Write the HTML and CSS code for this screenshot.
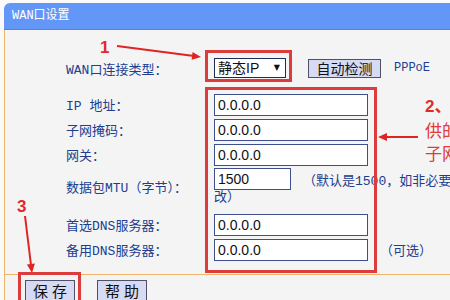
FILE: index.html
```html
<!DOCTYPE html>
<html lang="zh-CN">
<head>
    <meta charset="UTF-8" />
    <title>WAN口设置</title>
    <link rel="stylesheet" href="styles.css">
</head>
<body>
<div class="panel">
    <div class="panel-title">WAN口设置</div>
    <div class="panel-body">
        <div class="form">
            <div class="row row-type">
                <label class="label">WAN口连接类型：</label>
                <div class="field">
                    <span class="select-wrap">
                        <select class="select"><option>静态IP</option></select>
                    </span>
                    <button class="btn btn-detect">自动检测</button>
                    <span class="type-name">PPPoE</span>
                </div>
            </div>
            <div class="row">
                <label class="label">IP 地址：</label>
                <div class="field"><input class="input" value="0.0.0.0"></div>
            </div>
            <div class="row">
                <label class="label">子网掩码：</label>
                <div class="field"><input class="input" value="0.0.0.0"></div>
            </div>
            <div class="row">
                <label class="label">网关：</label>
                <div class="field"><input class="input" value="0.0.0.0"></div>
            </div>
            <div class="row row-mtu">
                <label class="label">数据包MTU（字节）：</label>
                <div class="field field-mtu">
                    <div class="mtu-line">
                        <input class="input input-short" value="1500">
                        <span class="note">（默认是1500，如非必要，请勿修</span>
                    </div>
                    <div class="note-wrap">改）</div>
                </div>
            </div>
            <div class="row row-dns">
                <label class="label">首选DNS服务器：</label>
                <div class="field"><input class="input" value="0.0.0.0"></div>
            </div>
            <div class="row">
                <label class="label">备用DNS服务器：</label>
                <div class="field">
                    <input class="input" value="0.0.0.0">
                    <span class="note">（可选）</span>
                </div>
            </div>
        </div>
        <div class="actions">
            <button class="btn btn-action">保存</button>
            <button class="btn btn-action">帮助</button>
        </div>
    </div>
</div>

<!-- tutorial markup drawn over the page -->
<div class="marks">
    <div class="mark-box box-type"></div>
    <div class="mark-box box-fields"></div>
    <div class="mark-box box-save"></div>
    <span class="mark-num num-1">1</span>
    <span class="mark-num num-3">3</span>
    <div class="mark-text">
        <div class="mark-num">2、请输入宽带运营商提</div>
        <div>供的IP地址、</div>
        <div>子网掩码、网关等</div>
    </div>
    <svg class="arrows" width="450" height="300" viewBox="0 0 450 300">
        <line x1="117" y1="46" x2="194" y2="56" />
        <polygon points="201,57 191.6,59.8 192.6,51.9" />
        <line x1="418" y1="137" x2="386" y2="137" />
        <polygon points="378,137 387,133 387,141" />
        <line x1="25" y1="216" x2="31" y2="265" />
        <polygon points="32,273 34.9,263.6 26.9,264.6" />
    </svg>
</div>
</body>
</html>
```

FILE: styles.css
```css
* {
    margin: 0;
    padding: 0;
    box-sizing: border-box;
}

body {
    background-color: #fafafa;
    font-family: "Liberation Mono", "Noto Sans CJK SC", monospace;
    color: #203d8f;
    overflow: hidden;
    width: 450px;
    height: 300px;
    position: relative;
}

.panel {
    margin: 3px 0 0 4px;
    width: 520px;
}

.panel-title {
    height: 27px;
    background-color: #6297f8;
    border-bottom: 1px solid #5182e8;
    border-top-left-radius: 6px;
    color: white;
    font-size: 12px;
    line-height: 26px;
    padding-left: 8px;
}

.panel-body {
    background-color: #f4f4f4;
    border-left: 1px solid #efb66a;
    min-height: 280px;
}

.form {
    padding: 24px 0 12px 61px;
}

.row {
    display: flex;
    align-items: center;
    height: 25px;
}

.row-type {
    height: 28px;
    margin-bottom: 10px;
}

.row-mtu {
    height: auto;
    padding: 1px 0;
}

.row-dns {
    margin-top: 6px;
}

.label {
    flex: 0 0 148px;
    font-size: 13px;
    white-space: nowrap;
}

.field {
    display: flex;
    align-items: center;
}

.field-mtu {
    display: block;
}

.mtu-line {
    display: flex;
    align-items: center;
    white-space: nowrap;
}

.note {
    font-size: 13px;
    margin-left: 12px;
    white-space: nowrap;
}

.note-wrap {
    font-size: 13px;
    line-height: 15px;
}

.input {
    width: 154px;
    height: 22px;
    border: 1px solid #3d4f8f;
    background: white;
    padding-left: 3px;
    font-family: "Liberation Sans", sans-serif;
    font-size: 14px;
    color: #111;
}

.input-short {
    width: 77px;
}

.select-wrap {
    position: relative;
    display: inline-block;
}

.select {
    appearance: none;
    width: 72px;
    height: 20px;
    border: 1px solid #1c2a5c;
    background: white;
    padding-left: 3px;
    font-family: "Liberation Sans", "Noto Sans CJK SC", sans-serif;
    font-size: 14px;
    color: #111;
}

.select-wrap::after {
    content: "▼";
    position: absolute;
    right: 6px;
    top: 5px;
    font-size: 8px;
    color: #111;
    font-family: "DejaVu Sans", sans-serif;
}

.btn {
    background-color: #d6daf3;
    border: 1px solid #505068;
    font-family: "Noto Sans CJK SC", sans-serif;
    color: #111;
    padding: 0;
}

.btn-detect {
    width: 73px;
    height: 19px;
    margin-left: 22px;
    font-size: 14px;
    line-height: 17px;
}

.type-name {
    margin-left: 13px;
    font-size: 12px;
}

.actions {
    border-top: 1px solid #efb66a;
    padding: 5px 0 0 20px;
    display: flex;
    gap: 22px;
}

.btn-action {
    width: 50px;
    height: 22px;
    font-size: 15px;
    line-height: 20px;
    letter-spacing: 4px;
    padding-left: 4px;
}

.marks {
    position: absolute;
    top: 0;
    left: 0;
    width: 450px;
    height: 300px;
    pointer-events: none;
}

.mark-box {
    position: absolute;
    border: 3px solid #dc3c3c;
}

.box-type {
    left: 205px;
    top: 50px;
    width: 87px;
    height: 32px;
}

.box-fields {
    left: 205px;
    top: 87px;
    width: 172px;
    height: 186px;
}

.box-save {
    left: 18px;
    top: 272px;
    width: 63px;
    height: 40px;
}

.mark-num {
    font-family: "Liberation Sans", "Noto Sans CJK SC", sans-serif;
    font-weight: bold;
    font-size: 17px;
    color: #e02a2a;
}

.num-1 {
    position: absolute;
    left: 100px;
    top: 38px;
}

.num-3 {
    position: absolute;
    left: 17px;
    top: 197px;
}

.mark-text {
    position: absolute;
    left: 425px;
    top: 95px;
    font-family: "Noto Sans CJK SC", sans-serif;
    font-size: 17px;
    line-height: 23px;
    color: #e03a3a;
    white-space: nowrap;
}

.arrows {
    position: absolute;
    top: 0;
    left: 0;
}

.arrows line {
    stroke: #e02424;
    stroke-width: 2;
}

.arrows polygon {
    fill: #e02424;
}
```
